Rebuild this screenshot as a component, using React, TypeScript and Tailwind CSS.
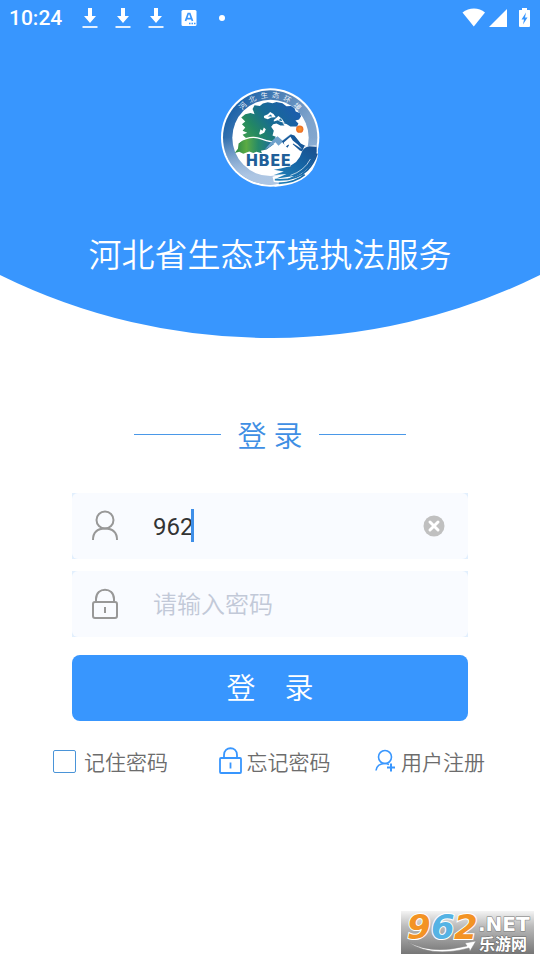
import { useState } from "react"

function DownloadIcon() {
  return (
    <svg viewBox="0 0 16 22" className="w-4 h-[22px]" fill="#fff">
      <path d="M6 1h4v8h4l-6 7-6-7h4z" />
      <path d="M0.5 19h15v2h-15z" opacity="0.85" />
    </svg>
  )
}

function StatusBar() {
  return (
    <div className="flex items-center justify-between h-9 pl-[9px] pr-2 text-white">
      <div className="flex items-center">
        <span className="w-[73px] text-[21px] leading-9 font-medium">10:24</span>
        <div className="flex items-center gap-[17px]">
          <DownloadIcon />
          <DownloadIcon />
          <DownloadIcon />
          <svg viewBox="0 0 16 16" className="w-4 h-4">
            <rect x="0.5" y="0" width="15" height="16" rx="1.5" fill="#fff" />
            <path d="M4.5 11 7.2 3.5h1.6L11.5 11M5.8 8.6h4.4" fill="none" stroke="#3896fe" strokeWidth="1.7" />
            <path d="M8 13.5h1.5M10.5 13.5h1.5M13 13.5h1.5" stroke="#3896fe" strokeWidth="1.3" />
          </svg>
        </div>
        <span className="w-1.5 h-1.5 ml-[22px] rounded-full bg-white"></span>
      </div>
      <svg viewBox="0 0 70 22" className="w-[70px] h-[22px]" fill="#fff">
        <path d="M0.5 5.5C7 0.3 17 0.3 23 5.5L11.8 19.5z" />
        <path d="M45 2v18H27z" />
        <path d="M60 1h5v2h2.5q.5 0 .5.5V19q0 1-1 1h-9q-1 0-1-1V3.5q0-.5.5-.5H60z" />
        <path d="M64 5.5 59.5 12.5H62L61 17.5 65.5 10.5H63z" fill="#3896fe" />
      </svg>
    </div>
  )
}

const RING_TEXT = [
  { char: "河", x: 96, y: 76, angle: -48 },
  { char: "北", x: 125, y: 56, angle: -27 },
  { char: "生", x: 161, y: 44, angle: -8 },
  { char: "态", x: 196, y: 44, angle: 9 },
  { char: "环", x: 231, y: 56, angle: 27 },
  { char: "境", x: 262, y: 78, angle: 46 },
]

function Logo() {
  return (
    <svg viewBox="31 23 298 298" className="w-[99px] h-[99px]" role="img" aria-label="HBEE">
      <defs>
        <linearGradient id="ring" x1="0.1" y1="0.2" x2="0.9" y2="0.8">
          <stop offset="0" stopColor="#1c62a8" />
          <stop offset="0.35" stopColor="#5384b8" />
          <stop offset="0.7" stopColor="#7da2cb" />
          <stop offset="1" stopColor="#86a9d0" />
        </linearGradient>
        <linearGradient id="fade" x1="0" y1="0" x2="0" y2="1">
          <stop offset="0.5" stopColor="#b3cae6" stopOpacity="0" />
          <stop offset="0.9" stopColor="#b3cae6" stopOpacity="0.9" />
        </linearGradient>
        <linearGradient id="tree" gradientUnits="userSpaceOnUse" x1="100" y1="190" x2="240" y2="85">
          <stop offset="0" stopColor="#43a04c" />
          <stop offset="0.3" stopColor="#238763" />
          <stop offset="0.6" stopColor="#176b92" />
          <stop offset="1" stopColor="#1b5eaa" />
        </linearGradient>
        <linearGradient id="hill" x1="0" y1="0" x2="1" y2="0">
          <stop offset="0" stopColor="#268548" />
          <stop offset="0.3" stopColor="#5cab43" />
          <stop offset="0.6" stopColor="#268a68" />
          <stop offset="1" stopColor="#1b6aa0" />
        </linearGradient>
        <linearGradient id="wave" x1="0" y1="1" x2="1" y2="0">
          <stop offset="0" stopColor="#2484b9" />
          <stop offset="0.5" stopColor="#1667a6" />
          <stop offset="1" stopColor="#194d8d" />
        </linearGradient>
        <radialGradient id="sun">
          <stop offset="0" stopColor="#fa9a2d" />
          <stop offset="1" stopColor="#ec6a22" />
        </radialGradient>
      </defs>
      <circle cx="179" cy="172" r="148" fill="#fff" />
      <circle cx="179" cy="172" r="142" fill="url(#ring)" />
      <circle cx="179" cy="172" r="142" fill="url(#fade)" />
      <circle cx="180" cy="173" r="115" fill="#fff" />
      {RING_TEXT.map(({ char, x, y, angle }) => (
        <text
          key={char}
          x={x}
          y={y}
          transform={`rotate(${angle} ${x} ${y})`}
          textAnchor="middle"
          dominantBaseline="central"
          fontSize="22"
          fill="#fff"
          className="font-['Noto_Sans_CJK_SC',sans-serif]"
        >
          {char}
        </text>
      ))}
      {/* Pine canopy and trunk */}
      <path
        fill="url(#tree)"
        d="M126 86L132 75 148 77 157 70 172 66 186 69 198 65 216 69 228 78 242 77 252 84 256 94 268 98 272 108 266 118 255 121 264 130 260 139 240 139 228 131 216 128 222 136 210 136 198 130 188 132 182 140 190 152 186 166 196 170 190 182 168 184 150 178 126 181 104 172 96 164 110 158 96 152 104 142 94 132 104 124 92 112 104 102 120 98 132 102 130 96z"
      />
      <path fill="#fff" d="M160 107L172 102 179 95 189 101 196 111 182 112 172 117 161 113zM190 119L204 107 215 116 223 129 208 124 202 120 190 124zM146 160L150 147 156 152 160 142 166 147 161 158 148 164z" />
      <path fill="#1d76a5" d="M172 109l9-6 4 6zM204 120l7-6 5 9z" />
      {/* Hillside */}
      <path fill="url(#hill)" d="M72 219L82 206 84 190 98 178 126 168 152 168 174 182 190 192 168 208 151 212 155 220 138 215 128 219 116 214 98 221 86 215z" />
      <path fill="none" stroke="#fff" strokeWidth="4" d="M84 186q35-22 68-10 17 7 28 8" />
      {/* Mountain */}
      <path fill="#70a2cc" d="M163 208L188 179 201 168 216 181 240 162 252 168 270 189 242 173 228 190 218 184 204 197 195 186 180 199z" />
      <path fill="#175899" d="M214 184L242 163 252 166 271 190 293 201 310 200 286 218 268 211 241 187 231 203 223 195z" />
      <path fill="#fff" d="M220 187L240 170 247 181 262 193 275 207 258 196 248 190 240 202 234 193 223 201z" />
      <circle cx="268" cy="147" r="11" fill="url(#sun)" />
      {/* River */}
      <path fill="#fff" d="M186 290Q240 280 264 238L282 198 316 196Q334 220 306 270 270 318 190 320L212 308 190 306z" />
      <path fill="url(#wave)" d="M190 269Q235 264 257 246 270 232 275 214 281 201 296 198L319 200Q323 232 296 262 267 290 226 300L250 288 196 296 228 282 190 285 220 274z" />
      <path fill="none" stroke="url(#wave)" strokeWidth="5" d="M193 299q65 4 98-29 20-20 29-50M205 310q50-2 78-26" />
      <path fill="none" stroke="#fff" strokeWidth="2" d="M240 286q42-14 60-49" />
      <text
        x="105"
        y="258"
        fontSize="46"
        fontWeight="700"
        fill="#205f99"
        stroke="#fff"
        strokeWidth="3"
        className="font-['DejaVu_Sans',sans-serif]"
        paintOrder="stroke"
      >
        HBEE
      </text>
    </svg>
  )
}

function UserIcon() {
  return (
    <svg viewBox="0 0 28 32" className="w-7 h-8 shrink-0" fill="none" stroke="#989898" strokeWidth="2">
      <circle cx="14" cy="10" r="8.5" />
      <path d="M2 30C2 22 7 18.5 14 18.5S26 22 26 30" />
    </svg>
  )
}

function LockIcon() {
  return (
    <svg viewBox="0 0 28 32" className="w-7 h-8 shrink-0" fill="none" stroke="#989898" strokeWidth="2">
      <rect x="2" y="14" width="24" height="16" rx="2" />
      <path d="M5 14v-3C5-1.5 23-1.5 23 11v3M14 19v6" />
    </svg>
  )
}

function Watermark() {
  return (
    <div className="absolute right-1.5 bottom-1.5">
      <svg viewBox="0 0 133 43" className="block w-[133px] h-[43px] overflow-visible" role="img" aria-label="962.NET 乐游网">
        <defs>
          <linearGradient id="plate" x1="0" y1="0" x2="0" y2="1">
            <stop offset="0" stopColor="#f4f4f4" />
            <stop offset="0.35" stopColor="#bcbcbc" />
            <stop offset="1" stopColor="#777" />
          </linearGradient>
        </defs>
        <path fill="url(#plate)" d="M0 0h133v43H0z" />
        <g fontSize="34" fontWeight="700" fontStyle="italic" stroke="#fff" strokeWidth="2" paintOrder="stroke" className="font-['DejaVu_Sans',sans-serif]">
          <text x="6" y="28" fill="#f39324">9</text>
          <text x="30" y="28" fill="#55b3e4">6</text>
          <text x="53" y="28" fill="#f39324">2</text>
        </g>
        <path d="M7 31Q30 44 66 35l-2-3 11-2-6 10-1-3Q30 47 7 31z" fill="#fff" stroke="#888" strokeWidth="0.5" />
        <text x="77" y="20" fontSize="20" fontWeight="700" fill="#fff" stroke="#777" strokeWidth="1" paintOrder="stroke" className="font-['DejaVu_Sans',sans-serif]">
          .NET
        </text>
        <text x="78" y="39" fontSize="16" fontWeight="700" fill="#fff" stroke="#666" strokeWidth="1" paintOrder="stroke" className="font-['Noto_Sans_CJK_SC',sans-serif]">
          乐游网
        </text>
      </svg>
    </div>
  )
}

export default function App() {
  const [account, setAccount] = useState("962")
  const [password, setPassword] = useState("")

  return (
    <div className="relative min-h-screen flex flex-col bg-white font-[Roboto,'Noto_Sans_CJK_SC',sans-serif] font-[350]">
      <header className="bg-[#3896fe]">
        <StatusBar />
        <div className="flex flex-col items-center pt-[52px]">
          <Logo />
          <h1 className="mt-[50px] text-[33px] leading-[38px] font-[350] text-white">河北省生态环境执法服务</h1>
        </div>
      </header>
      {/* Curved bottom edge of the header */}
      <svg viewBox="0 0 540 63" preserveAspectRatio="none" className="block w-full h-[63px] shrink-0">
        <path d="M0 0A610 610 0 0 0 540 0z" fill="#3896fe" />
      </svg>

      <main className="grow pt-[74px]">
        <form className="px-[72px]" onSubmit={(e) => e.preventDefault()}>
          <div className="flex items-center justify-center gap-4 h-11">
            <span className="w-[87px] h-px bg-[#4a98e8]"></span>
            <h2 className="pt-1.5 text-[29px] leading-10 text-[#3f8fe4]">登 录</h2>
            <span className="w-[87px] h-px bg-[#4a98e8]"></span>
          </div>

          <div className="mt-[37px] bg-[#e2effd]">
            <div className="flex items-center h-[66px] pl-[19px] pr-[23px] rounded-md bg-[#f9fbff]">
              <label htmlFor="account" aria-label="用户名"><UserIcon /></label>
              <div className="relative grow ml-[34px]">
                <input
                  id="account"
                  value={account}
                  onChange={(e) => setAccount(e.target.value)}
                  className="block w-full h-9 pt-0.5 bg-transparent text-2xl font-normal text-[#333] caret-transparent outline-none"
                />
                <span className="absolute left-[38px] top-px w-[3px] h-[33px] bg-[#3f8fe8]"></span>
              </div>
              <button type="button" aria-label="清除" onClick={() => setAccount("")}>
                <svg viewBox="0 0 22 22" className="block w-[22px] h-[22px]">
                  <circle cx="11" cy="11" r="10.5" fill="#c0c0c0" />
                  <path d="M7 7l8 8M15 7l-8 8" stroke="#fff" strokeWidth="3" strokeLinecap="round" />
                </svg>
              </button>
            </div>
          </div>

          <div className="mt-3 bg-[#e2effd]">
            <div className="flex items-center h-[66px] pl-[19px] pr-[23px] rounded-md bg-[#f9fbff]">
              <label htmlFor="password" aria-label="密码"><LockIcon /></label>
              <input
                id="password"
                type="password"
                placeholder="请输入密码"
                value={password}
                onChange={(e) => setPassword(e.target.value)}
                className="grow min-w-0 h-9 pt-0.5 ml-[34px] bg-transparent text-2xl text-[#333] placeholder:text-[#c2c9d8] outline-none"
              />
            </div>
          </div>

          <button type="submit" className="block w-full h-[66px] pt-1 mt-[18px] rounded-lg bg-[#3896fe] text-[29px] text-white">
            登&#12288;录
          </button>
        </form>

        <div className="flex items-center justify-between mt-5 pl-[53px] pr-[55px] text-[21px] leading-9 text-[#6c6c6c]">
          <label className="flex items-center gap-2">
            <input type="checkbox" className="appearance-none w-[23px] h-[23px] border border-[#4a94d8] rounded-xs checked:bg-[#3896fe]" />
            <span className="pt-1">记住密码</span>
          </label>
          <a href="#forgot" className="flex items-center gap-[5px] ml-1.5">
            <svg viewBox="0 0 23 28" className="w-[23px] h-7" fill="none" stroke="#3896fe" strokeWidth="1.8">
              <rect x="1" y="11" width="21" height="15" rx="1" />
              <path d="M5 11V8C5-1 18-1 18 8v3" />
              <path d="M11.5 15.5v6" />
            </svg>
            <span className="pt-1">忘记密码</span>
          </a>
          <a href="#register" className="flex items-center gap-[5px]">
            <svg viewBox="0 0 21 24" className="w-[21px] h-6" fill="none" stroke="#3896fe">
              <circle cx="10" cy="8" r="6.5" strokeWidth="1.6" />
              <path d="M1 21.5Q2 14.5 10 14.5q2 0 4 1" strokeWidth="1.6" />
              <path d="M12 18.5h8M16 14.5v8" strokeWidth="2" />
            </svg>
            <span className="pt-1">用户注册</span>
          </a>
        </div>
      </main>

      <Watermark />
    </div>
  )
}
